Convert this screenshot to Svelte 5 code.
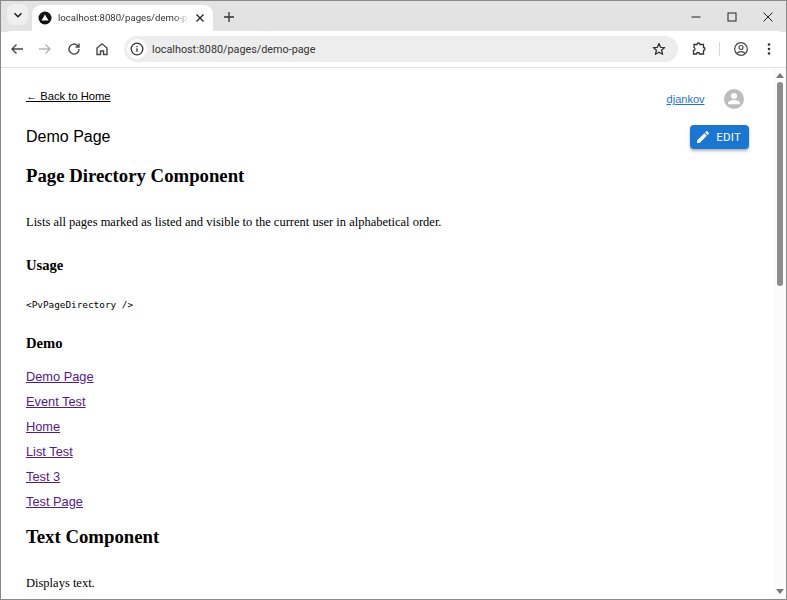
<script lang="ts">
	const pages = ['Demo Page', 'Event Test', 'Home', 'List Test', 'Test 3', 'Test Page'];
</script>

<div class="window">
	<div class="tabstrip">
		<button class="tab-search" aria-label="Search tabs">
			<svg width="12" height="12" viewBox="0 0 12 12"><path d="M2.5 4.2 6 7.7l3.5-3.5" fill="none" stroke="#1f1f1f" stroke-width="1.6" /></svg>
		</button>
		<div class="tab">
			<svg class="favicon" width="16" height="16" viewBox="0 0 16 16">
				<circle cx="8" cy="8" r="6.5" fill="#111" />
				<path d="M8 4.500 11.500 10.500H4.500z" fill="#fff" />
			</svg>
			<span class="tab-title">localhost:8080/pages/demo-page</span>
			<svg class="tab-close" width="10" height="10" viewBox="0 0 10 10"><path d="M1.5 1.5l7 7M8.500 1.5l-7 7" stroke="#222" stroke-width="1.3" /></svg>
		</div>
		<svg class="new-tab" width="12" height="12" viewBox="0 0 12 12"><path d="M6 1v10M1 6h10" stroke="#333" stroke-width="1.3" /></svg>
		<div class="window-controls">
			<svg width="12" height="12" viewBox="0 0 12 12"><path d="M1.500 6h9" stroke="#222" stroke-width="1" /></svg>
			<svg width="12" height="12" viewBox="0 0 12 12"><rect x="2" y="2" width="8" height="8" fill="none" stroke="#222" stroke-width="1" /></svg>
			<svg width="12" height="12" viewBox="0 0 12 12"><path d="M1.500 1.500l9 9M10.500 1.500l-9 9" stroke="#222" stroke-width="1" /></svg>
		</div>
	</div>

	<div class="toolbar">
		<svg class="tool" width="16" height="16" viewBox="0 0 16 16"><path d="M14 8H3M7.500 3.500 3 8l4.500 4.500" fill="none" stroke="#474747" stroke-width="1.4" /></svg>
		<svg class="tool forward" width="16" height="16" viewBox="0 0 16 16"><path d="M2 8h11M8.500 3.500 13 8l-4.500 4.500" fill="none" stroke="#b4b4b4" stroke-width="1.4" /></svg>
		<svg class="tool" width="16" height="16" viewBox="0 0 16 16"><path d="M13 8a5 5 0 1 1-1.500-3.500L13 6M13 2.500V6H9.500" fill="none" stroke="#474747" stroke-width="1.4" /></svg>
		<svg class="tool" width="16" height="16" viewBox="0 0 16 16"><path d="M3 7v6.500h3.500V10h3v3.500H13V7L8 2.800z" fill="none" stroke="#474747" stroke-width="1.4" /></svg>
		<div class="omnibox">
			<span class="site-info">
				<svg width="14" height="14" viewBox="0 0 14 14"><circle cx="7" cy="7" r="5.800" fill="none" stroke="#333" stroke-width="1.300" /><path d="M7 6.300v3.500M7 4v1.300" stroke="#333" stroke-width="1.300" /></svg>
			</span>
			<span class="url">localhost:8080/pages/demo-page</span>
			<svg class="star" width="14" height="14" viewBox="0 0 14 14"><path d="M7 1.500 8.600 5.300l4.100.3-3.100 2.700 1 4L7 10.200l-3.600 2.100 1-4L1.300 5.600l4.100-.3z" fill="none" stroke="#333" stroke-width="1.300" stroke-linejoin="round" /></svg>
		</div>
		<svg class="extensions" width="16" height="16" viewBox="0 0 16 16"><path d="M3 3.500h3a1.500 1.500 0 0 1 3 0h3.500v3a1.500 1.500 0 0 1 0 3V13H8.500a1.500 1.500 0 0 0-3 0H2.500V9.500a1.500 1.500 0 0 0 1.500-1.500A1.500 1.500 0 0 0 3 6.500z" fill="none" stroke="#333" stroke-width="1.300" /></svg>
		<span class="divider"></span>
		<svg class="profile" width="16" height="16" viewBox="0 0 16 16"><circle cx="8" cy="8" r="6.300" fill="none" stroke="#474747" stroke-width="1.200" /><circle cx="8" cy="6.500" r="2" fill="none" stroke="#474747" stroke-width="1.200" /><path d="M3.800 12.500c1.500-2.400 6.900-2.400 8.400 0" fill="none" stroke="#474747" stroke-width="1.200" /></svg>
		<svg class="menu" width="4" height="14" viewBox="0 0 4 14"><circle cx="2" cy="2.500" r="1.300" fill="#333" /><circle cx="2" cy="7" r="1.300" fill="#333" /><circle cx="2" cy="11.500" r="1.300" fill="#333" /></svg>
	</div>

	<div class="viewport">
		<main class="page">
			<div class="topbar">
				<a class="back" href="#home">← Back to Home</a>
				<div class="user">
					<a class="username" href="#user">djankov</a>
					<svg width="24" height="24" viewBox="0 0 24 24">
						<circle cx="12" cy="12" r="10" fill="#bdbdbd" />
						<circle cx="12" cy="9" r="3" fill="#fff" />
						<path d="M6 16.200c0-2 4-3.100 6-3.100s6 1.100 6 3.100V17.300H6z" fill="#fff" />
					</svg>
				</div>
			</div>
			<div class="title-row">
				<span class="page-title">Demo Page</span>
				<button class="edit">
					<svg width="16" height="16" viewBox="0 0 24 24"><path fill="#fff" d="M3 17.250V21h3.750L17.810 9.940l-3.750-3.750L3 17.250zM20.710 7.040a1 1 0 0 0 0-1.410l-2.340-2.340a1 1 0 0 0-1.410 0l-1.830 1.830 3.750 3.750 1.830-1.830z" /></svg>
					EDIT
				</button>
			</div>
			<h2>Page Directory Component</h2>
			<p>Lists all pages marked as listed and visible to the current user in alphabetical order.</p>
			<h3>Usage</h3>
			<code>&lt;PvPageDirectory /&gt;</code>
			<h3>Demo</h3>
			<ul class="directory">
				{#each pages as page}
					<li><a href="#page">{page}</a></li>
				{/each}
			</ul>
			<h2>Text Component</h2>
			<p>Displays text.</p>
		</main>
		<div class="scrollbar">
			<span class="arrow up"></span>
			<div class="track"><div class="thumb"></div></div>
			<span class="arrow down"></span>
		</div>
	</div>
</div>

<style>
	:global(body) {
		overflow: hidden;
	}

	.window {
		box-sizing: border-box;
		width: 787px;
		height: 600px;
		border: 1px solid #8a8a8a;
		display: flex;
		flex-direction: column;
		background: #fff;
		overflow: hidden;
	}

	.tabstrip {
		height: 31px;
		flex: none;
		background: #e3e3e3;
		display: flex;
		align-items: flex-end;
		padding-left: 6px;
	}

	.tab-search {
		width: 21px;
		height: 21px;
		margin-bottom: 7px;
		padding: 0;
		border: 0;
		border-radius: 7px;
		background: #efefef;
		display: flex;
		align-items: center;
		justify-content: center;
	}

	.tab {
		width: 181px;
		height: 27px;
		margin-left: 4px;
		background: #fff;
		border-radius: 9px 9px 0 0;
		display: flex;
		align-items: center;
		padding: 0 8px 2px 5px;
		box-sizing: border-box;
	}

	.favicon {
		flex: none;
		margin-right: 5px;
	}

	.tab-title {
		flex: 1;
		min-width: 0;
		font: 9.600px Roboto, sans-serif;
		color: #333;
		white-space: nowrap;
		overflow: hidden;
		mask-image: linear-gradient(to right, #000 88%, transparent);
	}

	.tab-close {
		flex: none;
		margin-left: 6px;
	}

	.new-tab {
		margin: 0 0 9px 10px;
	}

	.window-controls {
		margin-left: auto;
		align-self: center;
		display: flex;
		gap: 24px;
		padding-right: 12px;
	}

	.toolbar {
		height: 36px;
		flex: none;
		display: flex;
		align-items: center;
		background: #fff;
		border-bottom: 1px solid #e2e2e2;
		padding-left: 8px;
		border-radius: 9px 9px 0 0;
		margin-top: -1px;
	}

	.tool {
		flex: none;
		margin-right: 12px;
	}

	.tool.forward {
		margin-right: 13px;
	}

	.omnibox {
		width: 554px;
		height: 26px;
		margin-left: 2px;
		background: #eeeded;
		border-radius: 13px;
		display: flex;
		align-items: center;
		padding-left: 3px;
		box-sizing: border-box;
	}

	.site-info {
		width: 20px;
		height: 20px;
		border-radius: 50%;
		background: #fff;
		display: flex;
		align-items: center;
		justify-content: center;
	}

	.url {
		margin-left: 5px;
		flex: 1;
		font: 10.800px Roboto, sans-serif;
		color: #333;
	}

	.star {
		margin-right: 12px;
	}

	.extensions {
		margin-left: 13px;
	}

	.divider {
		width: 1px;
		height: 14px;
		background: #d8d8d8;
		margin-left: 12px;
	}

	.profile {
		margin-left: 13px;
	}

	.menu {
		margin-left: 18px;
	}

	.viewport {
		flex: 1;
		min-height: 0;
		display: flex;
		overflow: hidden;
	}

	.page {
		flex: 1;
		min-width: 0;
		padding: 0 24px 0 25px;
		font-family: "Liberation Serif", serif;
		color: #000;
		font-size: 12.5px;
	}

	.topbar {
		display: flex;
		justify-content: space-between;
		align-items: flex-start;
		padding-top: 19px;
		padding-right: 3.5px;
	}

	.back {
		font: 11.200px "Liberation Sans", sans-serif;
		color: #000;
		margin-top: 3px;
	}

	.user {
		display: flex;
		align-items: center;
		gap: 17px;
	}

	.username {
		font: 11px "Liberation Sans", sans-serif;
		color: #1976d2;
	}

	.title-row {
		display: flex;
		justify-content: space-between;
		align-items: center;
		margin-top: 14px;
	}

	.page-title {
		font: 16px "Liberation Sans", sans-serif;
	}

	.edit {
		display: flex;
		align-items: center;
		gap: 5px;
		height: 24px;
		padding: 0 8px 0 5px;
		border: 0;
		border-radius: 4px;
		background: #1976d2;
		color: #fff;
		font: 400 11.500px Roboto, sans-serif;
		letter-spacing: 0.2px;
		box-shadow: 0 2px 3px rgba(0, 0, 0, 0.3);
	}

	h2 {
		font-size: 18.750px;
		margin: 16px 0 0;
	}

	h3 {
		font-size: 14.625px;
		margin: 0;
	}

	p {
		margin: 28px 0 27px;
	}

	code {
		display: block;
		font: 9.375px "DejaVu Sans Mono", monospace;
		margin: 25px 0;
	}

	.directory {
		list-style: none;
		margin: 16.500px 0 -8.500px;
		padding: 0;
	}

	.directory li {
		height: 25px;
		font: 12.800px "Liberation Sans", sans-serif;
	}

	.directory a {
		color: #551a8b;
	}

	.scrollbar {
		width: 13px;
		flex: none;
		background: #fbfbfb;
		display: flex;
		flex-direction: column;
		align-items: center;
	}

	.track {
		flex: 1;
		width: 100%;
		padding: 0 3px 0 4px;
		box-sizing: border-box;
	}

	.thumb {
		height: 204px;
		background: #8c8c8c;
		border-radius: 3px;
	}

	.arrow {
		width: 0;
		height: 0;
		margin: 5px 0;
		border-left: 4px solid transparent;
		border-right: 4px solid transparent;
	}

	.arrow.up {
		margin-bottom: 4px;
		border-bottom: 5px solid #777;
	}

	.arrow.down {
		border-top: 5px solid #777;
	}
</style>
